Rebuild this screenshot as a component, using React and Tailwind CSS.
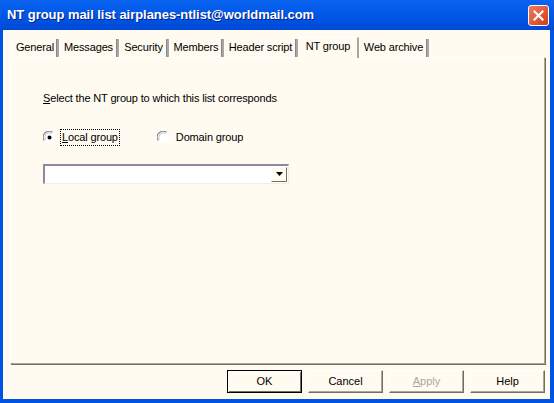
import React from "react";

const tabs = [
  { label: "General", w: "w-[47px]" },
  { label: "Messages", w: "w-[60px]" },
  { label: "Security", w: "w-[50px]" },
  { label: "Members", w: "w-[55px]" },
  { label: "Header script", w: "w-[74px]" },
  { label: "NT group", w: "w-[61px]", active: true },
  { label: "Web archive", w: "w-[70px]" },
];

const Radio = ({ checked }) => (
  <svg width="13" height="13" viewBox="0 0 13 13" className="shrink-0">
    <circle cx="6.5" cy="6.5" r="6" fill="#ffffff" />
    <path d="M1.2 9.5 A6 6 0 0 1 9.5 1.2" fill="none" stroke="#8f8b98" strokeWidth="1.2" />
    <path d="M2.3 8.7 A4.8 4.8 0 0 1 8.7 2.3" fill="none" stroke="#c9c6d0" strokeWidth="1" />
    {checked && <circle cx="6.5" cy="6.5" r="2" fill="#000000" />}
  </svg>
);

const Button = ({ children, primary, disabled }) => (
  <div
    className={
      "w-[75px] h-[23px] flex items-center justify-center text-[11px] " +
      (primary
        ? "border border-black shadow-[inset_1px_1px_0_#ffffff,inset_-1px_-1px_0_#716f64]"
        : "border-t border-l border-white border-r border-b border-r-[#716f64] border-b-[#716f64] shadow-[inset_-1px_-1px_0_#aca899]") +
      (disabled ? " text-[#aca899]" : " text-black")
    }
  >
    {children}
  </div>
);

const App = () => {
  return (
    <div
      className="w-[554px] h-[403px] flex flex-col bg-[#0054e3] overflow-hidden"
      style={{ fontFamily: '"Liberation Sans", Arial, sans-serif' }}
    >
      {/* Title bar */}
      <div className="h-[30px] shrink-0 flex items-center justify-between pl-[7px] pr-[5px] bg-gradient-to-b from-[#0a64f0] via-[#0057e6] to-[#0049d6]">
        <span className="text-white font-bold text-[13px] tracking-[-0.05px] [text-shadow:1px_1px_0_#0a1e8a]">
          NT group mail list airplanes-ntlist@worldmail.com
        </span>
        <div className="w-[21px] h-[21px] rounded-[3px] border border-white bg-gradient-to-br from-[#f07a5a] to-[#d33a12] flex items-center justify-center">
          <svg width="11" height="11" viewBox="0 0 11 11">
            <path d="M1.5 1.5 L9.5 9.5 M9.5 1.5 L1.5 9.5" stroke="#ffffff" strokeWidth="2.2" strokeLinecap="square" />
          </svg>
        </div>
      </div>

      {/* Body */}
      <div className="flex-1 ml-[3px] mr-[4px] mb-[4px] bg-[#fffbf0] flex flex-col">
        {/* Tabs */}
        <div className="flex items-end h-[20px] mt-[7px] ml-[9px] relative z-10 tracking-[-0.15px]">
          {tabs.map((t) =>
            t.active ? (
              <div
                key={t.label}
                className={`${t.w} h-[21px] -mb-px bg-[#fffbf0] border-t border-l border-white border-r-2 border-r-[#aca899] flex items-center justify-center text-[11px] text-black pb-[3px]`}
              >
                {t.label}
              </div>
            ) : (
              <div
                key={t.label}
                className={`${t.w} h-[18px] border-l border-white border-r-2 border-r-[#aca899] shadow-[inset_-1px_0_0_#8b8591] flex items-center justify-center text-[11px] text-black pb-[2px]`}
              >
                {t.label}
              </div>
            )
          )}
        </div>

        {/* Panel */}
        <div className="h-[307px] ml-[7px] mr-[5px] border-t border-l border-white border-r border-b border-r-[#aca899] border-b-[#aca899] shadow-[1px_1px_0_#716f64] text-[11px] text-black tracking-[-0.15px]">
          <div className="pl-[32px] pt-[32px]">
            <div>
              <span className="underline">S</span>elect the NT group to which this list corresponds
            </div>
            <div className="flex items-center mt-[22px] h-[17px]">
              <Radio checked />
              <span className="ml-[4px] px-[1px] border border-dotted border-black leading-[15px]">
                <span className="underline">L</span>ocal group
              </span>
              <div className="ml-[37px] flex items-center">
                <Radio />
                <span className="ml-[6px]">Domain group</span>
              </div>
            </div>
            <div className="mt-[18px] w-[246px] h-[20px] bg-white border-t-2 border-l-2 border-[#8e8a9c] border-r border-b border-r-[#f0eee8] border-b-[#f0eee8] flex justify-end items-stretch p-px">
              <div className="w-[16px] bg-[#fffbf0] border-t border-l border-white border-r border-b border-r-[#716f64] border-b-[#716f64] flex items-center justify-center">
                <svg width="7" height="4" viewBox="0 0 7 4">
                  <path d="M0 0 H7 L3.5 4 Z" fill="#000000" />
                </svg>
              </div>
            </div>
          </div>
        </div>

        {/* Buttons */}
        <div className="flex justify-end gap-[6px] mt-[6px] mr-[5px]">
          <Button primary>OK</Button>
          <Button>Cancel</Button>
          <Button disabled>
            <span>
              <span className="underline">A</span>pply
            </span>
          </Button>
          <Button>Help</Button>
        </div>
      </div>
    </div>
  );
};

export default App;
